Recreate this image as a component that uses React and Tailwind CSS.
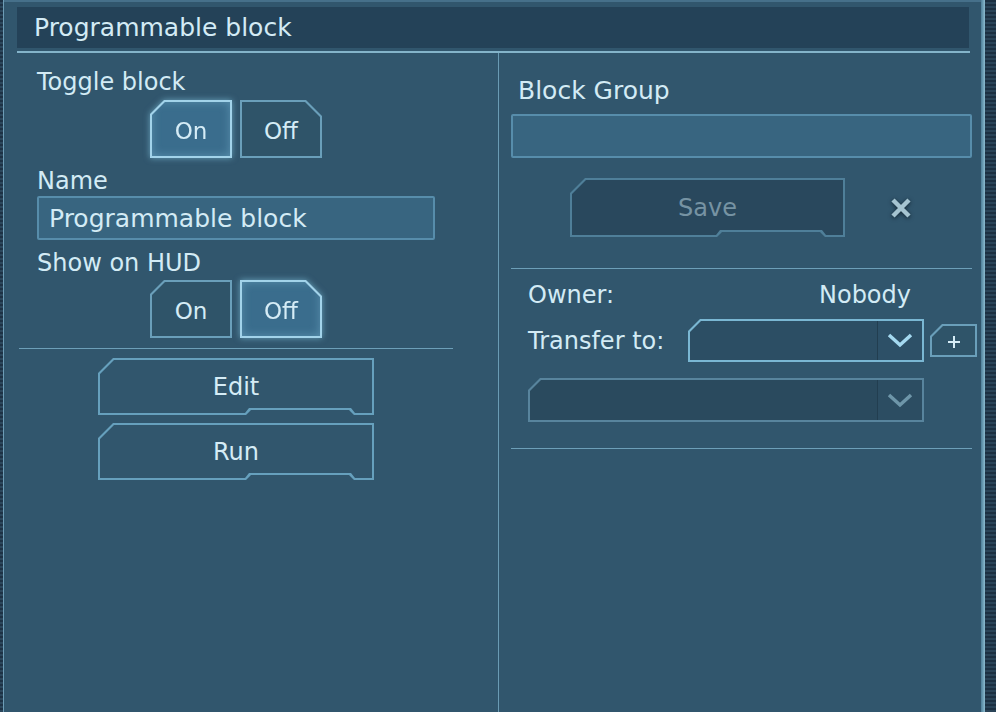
import React from 'react';

const LEFT_CUT = '[clip-path:polygon(14px_0,100%_0,100%_100%,0_100%,0_14px)]';
const LEFT_CUT_IN = '[clip-path:polygon(13px_0,100%_0,100%_100%,0_100%,0_13px)]';
const RIGHT_CUT = '[clip-path:polygon(0_0,calc(100%_-_16px)_0,100%_16px,100%_100%,0_100%)]';
const RIGHT_CUT_IN = '[clip-path:polygon(0_0,calc(100%_-_15px)_0,100%_15px,100%_100%,0_100%)]';
const NOTCH = '[clip-path:polygon(15px_0,100%_0,100%_100%,calc(100%_-_20px)_100%,calc(100%_-_25px)_calc(100%_-_5px),calc(100%_-_123px)_calc(100%_-_5px),calc(100%_-_128px)_100%,0_100%,0_15px)]';
const NOTCH_IN = '[clip-path:polygon(14px_0,100%_0,100%_100%,calc(100%_-_17px)_100%,calc(100%_-_21px)_calc(100%_-_5px),calc(100%_-_123px)_calc(100%_-_5px),calc(100%_-_127px)_100%,0_100%,0_14px)]';
const SMALL_CUT = '[clip-path:polygon(12px_0,100%_0,100%_100%,0_100%,0_12px)]';
const SMALL_CUT_IN = '[clip-path:polygon(11px_0,100%_0,100%_100%,0_100%,0_11px)]';

// outer div paints the border colour, inner div the fill; both share the cut shape
function Frame({ clip, clipIn, border, fill, className = '', innerClass = '', children }) {
  return (
    <div className={`${clip} ${border} p-[2px] shrink-0 ${className}`}>
      <div className={`${clipIn} ${fill} h-full w-full ${innerClass}`}>{children}</div>
    </div>
  );
}

function Seg({ label, active, left }) {
  return (
    <div className={active ? '[filter:drop-shadow(0_0_3px_rgba(140,210,240,0.6))]' : ''}>
      <Frame
        clip={left ? LEFT_CUT : RIGHT_CUT}
        clipIn={left ? LEFT_CUT_IN : RIGHT_CUT_IN}
        border={active ? 'bg-[#a2d3ea]' : 'bg-[#6a9fba]'}
        fill={active ? 'bg-[#3a6d8d] shadow-[inset_0_0_10px_rgba(150,210,235,0.35)]' : 'bg-[#2f5469]'}
        className="w-[82px] h-[58px]"
        innerClass="flex items-center justify-center"
      >
        <span className="mt-[4px] text-[23px] leading-none text-[#d5ecf6]">{label}</span>
      </Frame>
    </div>
  );
}

function Toggle({ on }) {
  return (
    <div className="flex justify-center gap-[8px]">
      <Seg label="On" active={on} left />
      <Seg label="Off" active={!on} />
    </div>
  );
}

function WideButton({ label, disabled }) {
  return (
    <Frame
      clip={NOTCH}
      clipIn={NOTCH_IN}
      border={disabled ? 'bg-[#4f7f99]' : 'bg-[#66a0bd]'}
      fill={disabled ? 'bg-[#29485d]' : 'bg-[#31566d]'}
      className={disabled ? 'w-[275px] h-[59px]' : 'w-[276px] h-[57px]'}
      innerClass="flex items-center justify-center"
    >
      <span className={`text-[24px] leading-none ${disabled ? 'text-[#7693a3]' : 'text-[#d5ecf6]'}`}>{label}</span>
    </Frame>
  );
}

function Chevron({ color }) {
  return (
    <svg width="26" height="15" viewBox="0 0 26 15">
      <path d="M2 2 L13 12 L24 2" fill="none" stroke={color} strokeWidth="3.5" />
    </svg>
  );
}

function Dropdown({ width, height, bright }) {
  return (
    <Frame
      clip={SMALL_CUT}
      clipIn={SMALL_CUT_IN}
      border={bright ? 'bg-[#7ab7d3]' : 'bg-[#58849d]'}
      fill={bright ? 'bg-[#2c4e64]' : 'bg-[#2a4a5e]'}
      className={`${width} ${height}`}
      innerClass="flex"
    >
      <div className="flex-1" />
      <div className="w-px bg-[#223e50]" />
      <div className={`w-[44px] flex items-center justify-center ${bright ? 'bg-[#2d5067]' : 'bg-[#2c4d62]'}`}>
        <Chevron color={bright ? '#a4d9f0' : '#6e96a9'} />
      </div>
    </Frame>
  );
}

const label = 'text-[24px] leading-[28px]';
const input = 'h-[44px] bg-[#386580] border-2 border-[#578dab] rounded-[2px]';

export default function App() {
  return (
    <div className="font-['DejaVu_Sans',sans-serif] w-full h-[712px] flex bg-[#31566d] text-[#d3ebf5] overflow-hidden">
      {/* left frame edge */}
      <div className="w-[4px] shrink-0 flex">
        <div className="w-[3px] bg-[repeating-linear-gradient(180deg,#1d3245_0px,#1d3245_2px,#2b475c_2px,#2b475c_4px)]" />
        <div className="w-px bg-[#6d9db6]" />
      </div>

      <div className="flex-1 min-w-0 flex flex-col border-t-2 border-[#46708a]">
        {/* title bar */}
        <div className="pl-[13px] pr-[12px] pt-[5px]">
          <div className="h-[41px] bg-[#244258] flex items-center pl-[17px]">
            <span className="text-[25px] leading-[28px]">Programmable block</span>
          </div>
        </div>
        <div className="mt-[3px] ml-[13px] mr-[11px] h-[2px] bg-[#84b4ca]" />

        <div className="flex-1 flex min-w-0">
          {/* left column */}
          <div className="ml-[13px] w-[482px] shrink-0 border-r border-[#6a9bb4]">
            <div className="ml-[2px] w-[434px] pt-[15px] flex flex-col">
              <div className={`pl-[18px] ${label}`}>Toggle block</div>
              <div className="mt-[4px]">
                <Toggle on />
              </div>
              <div className={`mt-[9px] pl-[18px] ${label}`}>Name</div>
              <div className={`mt-[1px] mx-[18px] ${input} flex items-center pl-[10px]`}>
                <span className="text-[25px] leading-none">Programmable block</span>
              </div>
              <div className={`mt-[9px] pl-[18px] ${label}`}>Show on HUD</div>
              <div className="mt-[3px]">
                <Toggle on={false} />
              </div>
              <div className="mt-[10px] h-px bg-[#6d9fb8]" />
              <div className="mt-[9px] flex flex-col items-center gap-[8px]">
                <WideButton label="Edit" />
                <WideButton label="Run" />
              </div>
            </div>
          </div>

          {/* right column */}
          <div className="flex-1 min-w-0 pl-[12px] pr-[9px] pt-[24px] flex flex-col">
            <div className="pl-[7px] text-[25px] leading-[28px]">Block Group</div>
            <div className={`mt-[9px] ${input}`} />
            <div className="mt-[20px] flex items-center">
              <div className="ml-[59px]">
                <WideButton label="Save" disabled />
              </div>
              <svg width="24" height="24" viewBox="0 0 24 24" className="ml-[44px] shrink-0 [filter:drop-shadow(0_1px_2px_rgba(10,25,35,0.8))]">
                <path d="M4 4 L20 20 M20 4 L4 20" stroke="#a5c4d1" strokeWidth="4.5" fill="none" />
              </svg>
            </div>
            <div className="mt-[31px] h-px bg-[#6d9fb8]" />

            <div className="pl-[17px] pt-[12px] flex flex-col">
              <div className={`w-[383px] flex justify-between ${label}`}>
                <span>Owner:</span>
                <span>Nobody</span>
              </div>
              <div className="mt-[10px] h-[43px] flex items-center">
                <span className={`w-[160px] shrink-0 ${label}`}>Transfer to:</span>
                <Dropdown width="w-[236px]" height="h-[43px]" bright />
                <Frame
                  clip={SMALL_CUT}
                  clipIn={SMALL_CUT_IN}
                  border="bg-[#6a9fba]"
                  fill="bg-[#2f5469]"
                  className="ml-[6px] w-[47px] h-[33px]"
                  innerClass="flex items-center justify-center"
                >
                  <svg width="14" height="14" viewBox="0 0 14 14" className="mt-[3px]">
                    <path d="M7 1 V13 M1 7 H13" stroke="#d5ecf6" strokeWidth="2" />
                  </svg>
                </Frame>
              </div>
              <div className="mt-[16px]">
                <Dropdown width="w-[396px]" height="h-[44px]" />
              </div>
            </div>
            <div className="mt-[26px] h-px bg-[#6d9fb8]" />
          </div>
        </div>
      </div>

      {/* right frame edge */}
      <div className="w-[15px] shrink-0 flex">
        <div className="w-[4px] bg-[linear-gradient(90deg,#4e7f99,#8cbcd0)]" />
        <div className="flex-1 bg-[repeating-linear-gradient(180deg,#1c3042_0px,#1c3042_2px,#2a4458_2px,#2a4458_4px)]" />
      </div>
    </div>
  );
}
